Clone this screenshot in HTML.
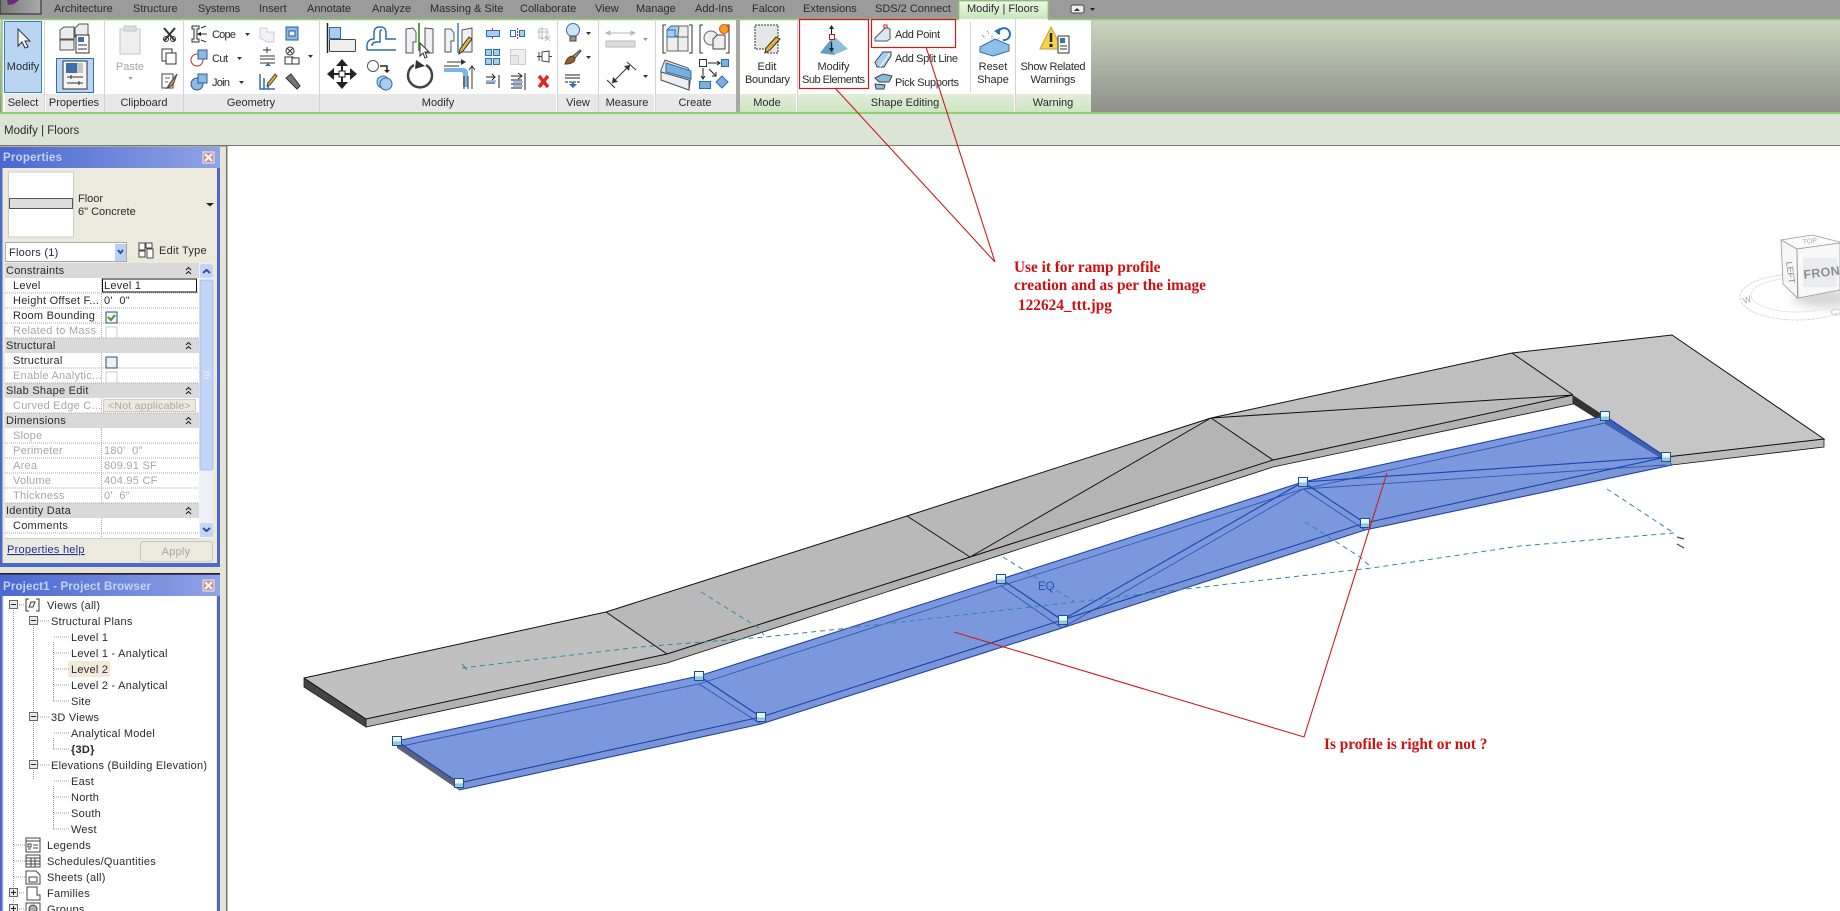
<!DOCTYPE html>
<html><head><meta charset="utf-8"><title>Modify | Floors</title>
<style>
html,body{margin:0;padding:0;background:#e6e4d6;overflow:hidden}
svg{display:block}
text{font-family:"Liberation Sans",sans-serif;font-size:11px;fill:#2a2a2a}
.c{text-anchor:middle}
.g{fill:#a6a6a6}
.h{font-weight:bold;fill:#c6d2f6;font-size:11.500px}
.p{letter-spacing:.25px}
.r{font-family:"Liberation Serif",serif;font-weight:bold;fill:#d01010;font-size:15.300px}
</style></head><body>
<svg width="1840" height="911" viewBox="0 0 1840 911" xmlns="http://www.w3.org/2000/svg">
<defs>
<linearGradient id="rb" x1="0" y1="0" x2="0" y2="1"><stop offset="0" stop-color="#c9d5bd"/><stop offset="1" stop-color="#8f908a"/></linearGradient>
<linearGradient id="tl" x1="0" y1="0" x2="1" y2="0"><stop offset="0" stop-color="#4a68cf"/><stop offset="1" stop-color="#8fa3e6"/></linearGradient>
<linearGradient id="hd" x1="0" y1="0" x2="0" y2="1"><stop offset="0" stop-color="#f4fdff"/><stop offset=".55" stop-color="#dff6fa"/><stop offset=".56" stop-color="#8ec5c8"/><stop offset="1" stop-color="#9fd0d4"/></linearGradient>
<linearGradient id="gl" x1="0" y1="0" x2="0" y2="1"><stop offset="0" stop-color="#dfeed8"/><stop offset="1" stop-color="#cfe4c6"/></linearGradient>
<linearGradient id="tb" x1="0" y1="0" x2="0" y2="1"><stop offset="0" stop-color="#eef8e8"/><stop offset="1" stop-color="#c4e6b4"/></linearGradient>
<linearGradient id="ap" x1="0" y1="0" x2="1" y2="0"><stop offset="0" stop-color="#777"/><stop offset="1" stop-color="#aaa"/></linearGradient>
<filter id="bl" x="-30%" y="-60%" width="160%" height="220%"><feGaussianBlur stdDeviation="5"/></filter>
<symbol id="H" viewBox="0 0 10 10"><rect x=".5" y=".5" width="9" height="9" fill="url(#hd)" stroke="#1d4f9e"/></symbol>
</defs>

<!-- top -->
<rect x="0" y="0" width="1840" height="19" fill="#9b9b9b"/>
<rect x="0" y="19" width="1840" height="94" fill="url(#rb)"/>
<rect x="0" y="-1" width="41" height="15" fill="url(#ap)" stroke="#222"/>
<path d="M7 0h12l-5 4-6 1z" fill="#6a2a78"/>
<g>
<text x="54" y="12">Architecture</text><text x="133" y="12">Structure</text><text x="198" y="12">Systems</text><text x="259" y="12">Insert</text><text x="307" y="12">Annotate</text><text x="372" y="12">Analyze</text><text x="430" y="12">Massing &amp; Site</text><text x="520" y="12">Collaborate</text><text x="595" y="12">View</text><text x="636" y="12">Manage</text><text x="695" y="12">Add-Ins</text><text x="752" y="12">Falcon</text><text x="803" y="12">Extensions</text><text x="875" y="12">SDS/2 Connect</text>
<rect x="959" y="1" width="89" height="19" fill="url(#tb)"/><path d="M959 19V1h89v18" fill="none" stroke="#8fd06e"/>
<text x="967" y="12">Modify | Floors</text>
<rect x="1071" y="5" width="13" height="8" rx="2" fill="#eee" stroke="#444"/><path d="M1074 11l3-3 3 3z" fill="#333"/><path d="M1090 8h5l-2.500 3z" fill="#222"/>
</g>
<!-- ribbon white -->
<rect x="2" y="19" width="1089" height="94" fill="#fff"/>
<path d="M2 113V19.500H959M1048 19.500H1840" fill="none" stroke="#8fd06e" stroke-width="1.500"/>
<rect x="0" y="112" width="1840" height="2" fill="#8fd06e"/>
<rect x="0" y="114" width="1840" height="31" fill="#dce4d5"/>
<g fill="#e8e8e8">
<rect x="5" y="94" width="39" height="18"/><rect x="46" y="94" width="58" height="18"/><rect x="105" y="94" width="78" height="18"/><rect x="184" y="94" width="135" height="18"/><rect x="320" y="94" width="236" height="18"/><rect x="558" y="94" width="40" height="18"/><rect x="599" y="94" width="55" height="18"/><rect x="656" y="94" width="80" height="18"/>
</g>
<g fill="url(#gl)"><rect x="740" y="94" width="56" height="18"/><rect x="798" y="94" width="216" height="18"/><rect x="1016" y="94" width="75" height="18"/></g>
<g fill="#d4d4d4"><rect x="44" y="19" width="1" height="93"/><rect x="104" y="19" width="1" height="93"/><rect x="183" y="19" width="1" height="93"/><rect x="319" y="19" width="1" height="93"/><rect x="557" y="19" width="1" height="93"/><rect x="598" y="19" width="1" height="93"/><rect x="655" y="19" width="1" height="93"/><rect x="970" y="22" width="1" height="70"/><rect x="797" y="19" width="1" height="93"/><rect x="1015" y="19" width="1" height="93"/></g>
<rect x="736" y="20" width="4" height="92" fill="#a8a8a4"/>
<g>
<text class="c" x="23" y="106">Select</text><text class="c" x="74" y="106">Properties</text><text class="c" x="144" y="106">Clipboard</text><text class="c" x="251" y="106">Geometry</text><text class="c" x="438" y="106">Modify</text><text class="c" x="578" y="106">View</text><text class="c" x="627" y="106">Measure</text><text class="c" x="695" y="106">Create</text><text class="c" x="767" y="106">Mode</text><text class="c" x="905" y="106">Shape Editing</text><text class="c" x="1053" y="106">Warning</text>
</g>
<!-- Select -->
<rect x="4.500" y="21.500" width="37" height="71" fill="#b9d5f2" stroke="#3a80c8"/>
<path d="M18 29v17l4-4 3 6 3-1-3-6h5z" fill="#f4f8fc" stroke="#333"/>
<text class="c" x="23" y="70">Modify</text>
<!-- Properties -->
<g fill="#ececec" stroke="#555"><path d="M60 30l4-3h10v12H60z"/><path d="M75 28l4-4h9v13H75z"/><path d="M60 40h14v10H60z"/></g>
<rect x="76" y="35" width="13" height="18" fill="#fff" stroke="#333"/><rect x="78" y="37" width="6" height="5" fill="#3f6fa8"/><path d="M78 45h9M78 49h9" stroke="#333"/>
<rect x="56.500" y="58.500" width="37" height="34" fill="#b9d5f2" stroke="#2b6fb8"/>
<rect x="63" y="61" width="24" height="28" fill="#f4f4f4" stroke="#333"/><rect x="66" y="63" width="11" height="10" fill="#3f6fa8"/><path d="M77 63h6v10h-6z" fill="#c5c5c5"/><path d="M67 77h16M67 83h16" stroke="#333"/><path d="M71 75v4M79 81v4" stroke="#333"/>
<!-- Clipboard -->
<rect x="120" y="29" width="20" height="25" fill="#eee" stroke="#c4c4c4"/><rect x="124" y="26" width="12" height="5" fill="#ddd" stroke="#c4c4c4"/>
<text class="c g" x="130" y="70">Paste</text><path d="M128 77h5l-2.500 3z" fill="#aaa"/>
<path d="M164 28l11 13M175 28l-11 13" stroke="#333" stroke-width="2"/><circle cx="166" cy="39" r="2.500" fill="none" stroke="#333"/><circle cx="173" cy="39" r="2.500" fill="none" stroke="#333"/>
<rect x="162" y="49" width="10" height="12" fill="#fff" stroke="#333"/><rect x="166" y="53" width="10" height="11" fill="#fff" stroke="#333"/>
<rect x="162" y="74" width="11" height="14" fill="#fff" stroke="#444"/><path d="M165 78h5M165 82h3" stroke="#3a70b0"/><path d="M177 74l-7 9-3 5 6-3z" fill="#c09040" stroke="#444"/>
<!-- Geometry -->
<path d="M192 26h7v3h-2v10h2v3h-7v-3h2V29h-2zM201 28l5-2M201 40l5 2M199 34h8" fill="#eee" stroke="#333"/><path d="M197 34l4-2v4z" fill="#111"/>
<text x="212" y="38" textLength="24">Cope</text><path d="M245 33h5l-2.500 3z" fill="#333"/>
<circle cx="197" cy="60" r="6" fill="#fff" stroke="#c03030"/><rect x="198" y="50" width="9" height="9" fill="#8db8e0" stroke="#2a5f98"/>
<text x="212" y="62" textLength="16">Cut</text><path d="M237 57h5l-2.500 3z" fill="#333"/>
<circle cx="197" cy="84" r="6" fill="#8db8e0" stroke="#2a5f98"/><rect x="198" y="74" width="9" height="9" fill="#8db8e0" stroke="#2a5f98"/>
<text x="212" y="86" textLength="18">Join</text><path d="M239 81h5l-2.500 3z" fill="#333"/>
<path d="M260 28h7v4h7v10h-7l-7-4z" fill="#eef2f6" stroke="#c8ccd0"/>
<rect x="286" y="27" width="12" height="13" fill="#8db8e0" stroke="#2a5f98"/><rect x="289" y="31" width="6" height="5" fill="#e8f0f8" stroke="#2a5f98"/>
<path d="M263 50h8M267 47v6M260 56h15M260 59h15M260 63h15" stroke="#333" fill="none"/><path d="M268 63l-3 3h6z" fill="#2a6fb8"/>
<circle cx="290" cy="51" r="4" fill="none" stroke="#333"/><path d="M287 48l6 6M293 48l-6 6" stroke="#333"/><rect x="285" y="57" width="8" height="7" fill="#fff" stroke="#333"/><rect x="292" y="58" width="7" height="6" fill="#fff" stroke="#333"/><path d="M308 55h5l-2.500 3z" fill="#333"/>
<path d="M260 74v15h15M264 89V78M268 89v-7" stroke="#2a6fb8" stroke-width="1.500" fill="none"/><path d="M275 74l-7 9-1 3 3-1 7-9z" fill="#e8b030" stroke="#444"/>
<path d="M286 78l5-4 9 12-3 3z" fill="#777" stroke="#333"/>
<!-- Modify large -->
<path d="M327.500 23v30" stroke="#222" stroke-width="1.500"/><rect x="329.500" y="27.500" width="11" height="11" fill="#a9cdf0" stroke="#2f6fa8"/><rect x="329.500" y="39.500" width="26" height="12" rx="1" fill="#eee" stroke="#444"/>
<path d="M367 50v-4c0-5 3-7 7-7v-6c0-4 2-6 5-6h2c3 0 5 2 5 6v6h10M367 50h29M372 46c0-2 1-4 5-4h3V33c0-2 0-3 2-3" fill="none" stroke="#2f6fa8" stroke-width="1.500"/>
<path d="M406 29l7-1 3 4v10h-3v11h-7zM433 29l-8-1v25h8z" fill="#eef2f6" stroke="#555"/><path d="M419 23v28" stroke="#5aa040" stroke-width="2"/><path d="M420 43v13l3-3 2 5 2-1-2-5h4z" fill="#fff" stroke="#333"/>
<path d="M445 29h6l3 4v8h-3v11h-6zM462 30l10-2v24h-10z" fill="#eef2f6" stroke="#555"/><path d="M458 23v30" stroke="#3a80c8" stroke-width="1.500"/><path d="M472 39l-9 12-4 3 1-5 9-12z" fill="#e8b030" stroke="#333"/>
<path d="M342 59l6 7h-12zM342 89l6-7h-12zM327 74l7-6v12zM357 74l-7-6v12z" fill="#222"/><rect x="339" y="71" width="6" height="6" fill="#fff" stroke="#222"/><path d="M342 65v6M342 77v6M334 74h5M345 74h5" stroke="#222" stroke-width="2"/>
<circle cx="373" cy="66" r="5.500" fill="#fff" stroke="#555"/><path d="M380 66h7v5" fill="none" stroke="#222" stroke-width="1.500"/><path d="M384 70h6l-3 3z" fill="#222"/><circle cx="383" cy="82" r="6" fill="#a9cdf0" stroke="#2f6fa8"/><circle cx="386" cy="84" r="6" fill="#a9cdf0" stroke="#2f6fa8"/>
<path d="M414 65a12 12 0 1 0 12 0" fill="none" stroke="#444" stroke-width="2.500"/><path d="M416 60l9 6-10 3z" fill="#333"/>
<path d="M444 66h15M447 62h14" fill="none" stroke="#333"/><path d="M461 59l5 3-5 3z" fill="#333"/><path d="M444 68h19c3 0 5 2 5 5v14h-5V74c0-1-1-2-2-2H444z" fill="#7cb4e4"/><path d="M464 89V76M468 89V76M472 89V66M469 70l3-4 3 4" fill="none" stroke="#333"/>
<!-- small modify -->
<path d="M492.500 28v11" stroke="#c03030" stroke-dasharray="2 1"/><rect x="486.500" y="30.500" width="13" height="6" fill="#a9cdf0" stroke="#2f6fa8"/>
<path d="M517.500 28v11" stroke="#c03030" stroke-dasharray="2 1"/><rect x="510.500" y="30.500" width="5" height="6" fill="#fff" stroke="#2f6fa8"/><rect x="519.500" y="30.500" width="5" height="6" fill="#a9cdf0" stroke="#2f6fa8"/>
<path d="M539 29h8v9h-8zM537 32h12M542 27v13" stroke="#bbb" fill="none"/><path d="M545 36l5 5M550 36l-5 5" stroke="#bbb"/>
<g fill="#a9cdf0" stroke="#2f6fa8"><rect x="485.500" y="49.500" width="6" height="6"/><rect x="493.500" y="49.500" width="6" height="6"/><rect x="485.500" y="58.500" width="6" height="6"/><rect x="493.500" y="58.500" width="6" height="6"/></g>
<rect x="510.500" y="49.500" width="15" height="15" fill="#f0f0f0" stroke="#ccc"/><rect x="510.500" y="55.500" width="8" height="9" fill="#e8e8e8" stroke="#ccc"/>
<path d="M542 52l7-1v11l-7-1zM537 56.500h5M549 56.500h3M539 52v9" fill="none" stroke="#444"/>
<path d="M486 77h9M492 74l3 3-3 3M486 83h9M499 75v13" fill="none" stroke="#222"/><path d="M486 81h10" stroke="#3a80c8"/>
<path d="M511 76h10M518 73l4 3-4 3M511 80h11M511 84h11M511 88h11M525 73v17" fill="none" stroke="#222"/><path d="M513 82h10M513 86h10" stroke="#3a80c8"/>
<path d="M539 76l9 11M548 76l-9 11" stroke="#e02828" stroke-width="3.500"/>
<!-- view -->
<circle cx="573" cy="30" r="6.500" fill="#cfe4f8" stroke="#3a6fa8"/><rect x="570" y="36" width="6" height="5" fill="#999" stroke="#444"/><path d="M586 32h5l-2.500 3z" fill="#333"/>
<path d="M565 64c2-7 6-8 8-8l2 3c0 3-4 5-10 5z" fill="#a05a20" stroke="#444"/><path d="M573 56l7-6 1 1-6 7z" fill="#c8a060" stroke="#444"/><path d="M586 56h5l-2.500 3z" fill="#333"/>
<path d="M565 75h15M565 78h15" stroke="#222"/><path d="M565 82h15" stroke="#222" stroke-dasharray="3 1"/><path d="M573 82v3" stroke="#2a6fb8" stroke-width="2"/><path d="M569 84h8l-4 4z" fill="#2a6fb8"/>
<!-- measure -->
<path d="M606 33h29M606 33l4-2v4zM635 33l-4-2v4z" stroke="#b8b8b8" fill="#b8b8b8"/><rect x="606" y="41" width="29" height="6" fill="#ddd" stroke="#bbb"/><path d="M643 38h5l-2.500 3z" fill="#999"/>
<path d="M612 83l18-18M607 80l8 8M627 62l9 8" stroke="#333" fill="none"/><path d="M630 65l-6 1 5 5zM612 83l6-1-5-5z" fill="#333"/><path d="M643 75h5l-2.500 3z" fill="#333"/>
<!-- create -->
<path d="M666 25h-3v28h3M689 25h3v28h-3" fill="none" stroke="#333"/><path d="M667 37v-7l4-4h8v9l-4 2z" fill="#a9cdf0" stroke="#2f6fa8"/><path d="M667 37h11v14h-11zM678 37h10v14h-10zM679 26l9 0v11h-10z" fill="#eee" stroke="#666"/><path d="M667 30h8v7h-8z" fill="#a9cdf0" stroke="#2f6fa8"/>
<path d="M703 25h-3v28h3M726 25h3v28h-3" fill="none" stroke="#333"/><circle cx="711" cy="38" r="7" fill="#eee" stroke="#666"/><path d="M713 39l4-4h8v14h-12z" fill="#eee" stroke="#444"/><circle cx="724" cy="29" r="4.500" fill="#f0a020" stroke="#e04a10"/>
<path d="M661 70l4-10 23 8 3 7-2 15-28-10z" fill="#e4e8ee" stroke="#555"/><path d="M666 63l25 8v8l-25-7z" fill="#7ab0de" stroke="#2f6fa8"/><path d="M661 72l27 8v10" fill="#e4e8ee" stroke="#555"/><path d="M661 72l28 8v10l-28-10z" fill="#eceff3" stroke="#555"/>
<rect x="699.500" y="59.500" width="7" height="7" fill="#fff" stroke="#333"/><rect x="721.500" y="59.500" width="7" height="7" fill="#7ab0de" stroke="#2f6fa8"/><path d="M708 63h12M717 61l3 2-3 2M703 68v11M701 76l2 3 2-3M709 69l7 7M716 72v4h-4" stroke="#222" fill="none"/><rect x="699.500" y="81.500" width="11" height="7" fill="#7ab0de" stroke="#2f6fa8"/><path d="M722 76l6 6-6 6-6-6z" fill="#7ab0de" stroke="#2f6fa8"/>
<!-- mode -->
<path d="M755 25h23v28h-12v-4h-11z" fill="#e6e6e6" stroke="#333" stroke-dasharray="2 1"/><path d="M780 39l-10 11-5 3 1-5 10-11z" fill="#e8b030" stroke="#333"/>
<text class="c" x="767" y="70">Edit</text><text class="c" x="767.500" y="83" textLength="45">Boundary</text>
<!-- shape edit -->
<path d="M820 53l12-15h4l12 11-14 6z" fill="#8dc0da"/><path d="M820 53l12-15 2 17z" fill="#5f9fc4"/><path d="M831.500 26v10M831.500 42v8" stroke="#222"/><path d="M829 29l2.500-4 2.500 4zM829 48l2.500 4 2.500-4z" fill="#222"/><rect x="829.500" y="34.500" width="5" height="5" fill="#fff" stroke="#c02020"/>
<text class="c" x="833.500" y="70" textLength="32">Modify</text><text class="c" x="833.500" y="83" textLength="63">Sub Elements</text>
<path d="M875 38l11-11 4 2v10l-3 2h-12z" fill="#dce8f0" stroke="#555"/><rect x="884" y="25" width="3" height="3" fill="#fff" stroke="#c02020"/><text x="895" y="38" textLength="45">Add Point</text>
<path d="M875 62l8-10h8v4l-7 11h-7z" fill="#a9cdf0" stroke="#444"/><path d="M880 67l10-14" stroke="#fff"/><text x="895" y="62" textLength="63">Add Split Line</text>
<path d="M875 78l8-4 9 2-3 6-10 0zM875 84l10 1-1 4-8 0z" fill="#8dbcd8" stroke="#444"/><text x="895" y="86" textLength="64">Pick Supports</text>
<path d="M980 47l15-8 14 6v6l-16 5-13-4z" fill="#8dc0e8" stroke="#2f6fa8"/><path d="M982 35l3 3M987 31l2 3M992 36v3M997 40l2-2" stroke="#666" stroke-dasharray="1 1"/><path d="M998 34a6 6 0 1 1 5 6" fill="none" stroke="#2a6fb8" stroke-width="2"/><path d="M994 31l6-3v7z" fill="#2a6fb8"/>
<text class="c" x="993" y="70">Reset</text><text class="c" x="993" y="83">Shape</text>
<path d="M1051 27l-11 22h22z" fill="#f6d44a" stroke="#c0a030"/><path d="M1051 33v9" stroke="#222" stroke-width="2.500"/><rect x="1049.500" y="44" width="3" height="3" fill="#222"/><rect x="1058" y="36" width="11" height="17" fill="#fff" stroke="#333"/><rect x="1060" y="38" width="5" height="5" fill="#3f6fa8"/><path d="M1060 46h7M1060 49h7" stroke="#333"/>
<text class="c" x="1053" y="70" textLength="65">Show Related</text><text class="c" x="1053" y="83" textLength="45">Warnings</text>

<text x="4" y="134" style="font-size:11.500px">Modify | Floors</text>
<rect x="0" y="145" width="1840" height="1.500" fill="#77776c"/>

<!-- viewport -->
<rect x="226" y="146" width="1614" height="765" fill="#fff"/>
<rect x="226" y="146" width="1.500" height="765" fill="#77776c"/>

<!-- grey slab -->
<polygon points="366,719 667,654 970,557 1273,460 1573,395 1573,404 1273,467 970,565 667,663 366,727" fill="#b2b2b2" stroke="#111" stroke-width=".8"/>
<polygon points="1666,457 1824,439 1824,447 1672,465" fill="#bbb" stroke="#111" stroke-width=".8"/>
<polygon points="304,678 366,719 366,727 304,687" fill="#444" stroke="#222" stroke-width=".8"/>
<polygon points="1573,395 1605,416 1605,424 1573,404" fill="#333"/>
<polygon points="304,678 606,612 667,654 366,719" fill="#c0c0c0"/>
<polygon points="606,612 907,516 970,557 667,654" fill="#b9b9b9"/>
<polygon points="907,516 1211,418 970,557" fill="#b8b8b8"/>
<polygon points="1211,418 1273,460 970,557" fill="#b4b4b4"/>
<polygon points="1211,418 1512,353 1573,395" fill="#bfbfbf"/>
<polygon points="1211,418 1573,395 1273,460" fill="#bbb"/>
<polygon points="1512,353 1672,335 1824,439 1666,457 1573,395" fill="#c6c6c6"/>
<path d="M304 678L606 612 907 516 1211 418 1512 353 1672 335 1824 439 1666 457M1573 395L1273 460 970 557 667 654 366 719 304 678M606 612L667 654M907 516L970 557M1211 418L970 557M1211 418L1273 460M1211 418L1573 395M1512 353L1573 395" fill="none" stroke="#111" stroke-width="1"/>

<!-- blue slab -->
<polygon points="397,741 699,676 1001,579 1303,482 1605,416 1672,465 1365,530 1062,628 761,724 459,790" fill="#7c98dc"/>
<polygon points="397,741 459,783 459,790 397,748" fill="#5a627c"/>
<polygon points="1605,416 1666,457 1672,465 1605,424" fill="#3f5fb0"/>
<polygon points="459,783 761,717 1062,620 1365,523 1666,457 1672,465 1365,530 1062,628 761,724 459,790" fill="#7c95d4"/>
<path d="M397 747L699 684 1001 586 1303 489 1605 423M699 684L761 724M1001 586L1062 628M1303 489L1365 530M1303 489L1062 628M1303 489L1666 465" fill="none" stroke="#2f55b5" stroke-width=".9"/>
<path d="M397 741L699 676 1001 579 1303 482 1605 416 1666 457M397 741L459 783 761 717 1062 620 1365 523 1666 457M699 676L761 717M1001 579L1062 620M1303 482L1365 523M1303 482L1062 620M1303 482L1666 457M459 790L761 724 1062 628 1365 530 1672 465" fill="none" stroke="#1742b4" stroke-width="1.100"/>
<text x="1038" y="590" style="font-size:11.500px;fill:#2450b0">EQ</text>

<!-- dashes -->
<path d="M462 668L640 647 765 637 840 629 1075 602 1246 582 1372 568 1520 546 1674 533M701 592L759 628 765 637M1003 557L1075 602M1305 522L1360 557 1372 568M1607 489L1674 533" fill="none" stroke="#2c8aa8" stroke-width="1" stroke-dasharray="5 4"/>
<path d="M1677 537l7 2M1677 544l7 4" stroke="#234a7a" stroke-width="1.200"/>
<path d="M462 664l5 6" stroke="#2c8aa8"/>

<!-- handles -->
<g><use href="#H" x="392" y="736" width="10" height="10"/><use href="#H" x="454" y="778" width="10" height="10"/><use href="#H" x="694" y="671" width="10" height="10"/><use href="#H" x="756" y="712" width="10" height="10"/><use href="#H" x="996" y="574" width="10" height="10"/><use href="#H" x="1058" y="615" width="10" height="10"/><use href="#H" x="1298" y="477" width="10" height="10"/><use href="#H" x="1360" y="518" width="10" height="10"/><use href="#H" x="1600" y="411" width="10" height="10"/><use href="#H" x="1661" y="452" width="10" height="10"/></g>

<!-- red annotation -->
<rect x="799.500" y="19.500" width="69" height="69" fill="none" stroke="#c81e1e" stroke-width="1.200"/>
<rect x="871.500" y="19.500" width="84" height="28" fill="none" stroke="#c81e1e" stroke-width="1.200"/>
<path d="M835 88L995 262M926 47L995 262M954 632L1304 737 1387 473" fill="none" stroke="#d01c1c" stroke-width="1.100"/>
<text class="r" x="1014" y="272">Use it for ramp profile</text>
<text class="r" x="1014" y="290">creation and as per the image</text>
<text class="r" x="1018" y="310">122624_ttt.jpg</text>
<text class="r" x="1324" y="749">Is profile is right or not ?</text>

<!-- nav cube -->
<ellipse cx="1825" cy="298" rx="32" ry="9" fill="#d4d4d4" filter="url(#bl)"/>
<ellipse cx="1797" cy="297" rx="57" ry="23" fill="none" stroke="#d6d6d6" stroke-width=".9" stroke-dasharray="3 1"/>
<ellipse cx="1797" cy="295" rx="46" ry="17" fill="none" stroke="#e2e2e2" stroke-width=".8"/>
<path d="M1781 240l31-5 28 7v1l-43 6z" fill="#fbfbfb" stroke="#999" stroke-width=".8"/>
<path d="M1781 240l16 9 .5 49-14.500-14z" fill="#f6f6f6" stroke="#999" stroke-width=".8"/>
<path d="M1797 249l43-6v47l-42 8z" fill="#f8f8f8" stroke="#999" stroke-width=".8"/>
<rect x="1803" y="258" width="34" height="29" fill="#ececec"/>
<text x="1804" y="279" transform="rotate(-7 1804 279)" style="font-size:12.500px;font-weight:bold;fill:#8a8f96;letter-spacing:.3px">FRONT</text>
<text x="1786" y="262" transform="rotate(82 1786 262)" style="font-size:9px;fill:#888">LEFT</text>
<text x="1803" y="244" transform="rotate(-5 1803 244)" style="font-size:7px;fill:#aaa">TOP</text>
<text x="1744" y="304" transform="rotate(-20 1744 304)" style="font-size:9px;fill:#aaa">W</text>
<ellipse cx="1836" cy="312" rx="5" ry="3" fill="none" stroke="#ccc"/>

<!-- PROPERTIES -->
<rect x="0" y="147" width="220" height="420" fill="#4c68cd"/>
<rect x="0" y="147" width="220" height="21" fill="url(#tl)"/>
<text class="h" x="3" y="161" textLength="59">Properties</text>
<rect x="203" y="152" width="11" height="11" fill="#c98f8f" stroke="#eee"/><path d="M205 154l7 7M212 154l-7 7" stroke="#fff" stroke-width="2"/>
<rect x="2.500" y="168" width="214.500" height="395" fill="#eceadc"/>
<rect x="8.500" y="172" width="65" height="65" fill="#fff" stroke="#ccc"/>
<rect x="9.500" y="198.500" width="63" height="10" fill="#ddd" stroke="#555"/>
<text x="78" y="202">Floor</text><text x="78" y="215">6" Concrete</text><path d="M206 203h8l-4 3.500z" fill="#222"/>
<rect x="5.500" y="242.500" width="121" height="19" fill="#fff" stroke="#aaa"/><text class="p" x="9" y="256">Floors (1)</text>
<rect x="115" y="244" width="11" height="17" fill="#bcd0f4"/><path d="M118 250l2.500 3 2.500-3" fill="none" stroke="#2d4fa0" stroke-width="2"/>
<path d="M139 243h6v7h-6zM146 243h6v5h-6zM139 251h6v6h-6zM147 249h6v9h-6z" fill="#fff" stroke="#444"/>
<text class="p" x="159" y="254">Edit Type</text>
<rect x="5" y="263" width="194" height="275" fill="#fff"/>
<g fill="#d9d9d9"><rect x="5" y="263" width="194" height="15"/><rect x="5" y="338" width="194" height="15"/><rect x="5" y="383" width="194" height="15"/><rect x="5" y="413" width="194" height="15"/><rect x="5" y="503" width="194" height="15"/></g>
<g stroke="#aaa" stroke-dasharray="1 1" fill="none"><path d="M5 293h194M5 308h194M5 323h194M5 338h194M5 368h194M5 383h194M5 413h194M5 443h194M5 458h194M5 473h194M5 488h194M5 503h194M5 533h194M101.500 278v60M101.500 353v30M101.500 398v15M101.500 428v75M101.500 518v20"/></g>
<rect x="5" y="538" width="194" height="1" fill="#ccc"/>
<g class="p">
<text class="p" x="6" y="274">Constraints</text><text class="p" x="13" y="289">Level</text><text class="p" x="13" y="304">Height Offset F...</text><text class="p" x="104" y="304">0'&#160; 0"</text><text class="p" x="13" y="319">Room Bounding</text><text class="p g" x="13" y="334">Related to Mass</text>
<text class="p" x="6" y="349">Structural</text><text class="p" x="13" y="364">Structural</text><text class="p g" x="13" y="379">Enable Analytic...</text>
<text class="p" x="6" y="394">Slab Shape Edit</text><text class="p g" x="13" y="409">Curved Edge C...</text>
<text class="p" x="6" y="424">Dimensions</text><text class="p g" x="13" y="439">Slope</text><text class="p g" x="13" y="454">Perimeter</text><text class="p g" x="104" y="454">180'&#160; 0"</text><text class="p g" x="13" y="469">Area</text><text class="p g" x="104" y="469">809.91 SF</text><text class="p g" x="13" y="484">Volume</text><text class="p g" x="104" y="484">404.95 CF</text><text class="p g" x="13" y="499">Thickness</text><text class="p g" x="104" y="499">0'&#160; 6"</text>
<text class="p" x="6" y="514">Identity Data</text><text class="p" x="13" y="529">Comments</text>
</g>
<rect x="102.500" y="279" width="94" height="13" fill="#fff" stroke="#111"/><text class="p" x="104" y="289">Level 1</text>
<rect x="106" y="312" width="11" height="11" fill="#f2f8f2" stroke="#2b4f6f"/><path d="M108 317l3 3 4-5" fill="none" stroke="#3a9a3a" stroke-width="2"/>
<rect x="106" y="327" width="11" height="11" fill="#fff" stroke="#ccc"/><rect x="106" y="357" width="11" height="11" fill="#eef2f6" stroke="#2b4f6f"/><rect x="106" y="372" width="11" height="11" fill="#fff" stroke="#ccc"/>
<rect x="103.500" y="399.500" width="92" height="12" fill="#eceae0" stroke="#ccc"/><text class="p g" x="108" y="409" style="font-size:10.500px">&lt;Not applicable&gt;</text>
<g fill="none" stroke="#222" stroke-width="1.100"><path d="M186 270l2.500-2.500 2.500 2.500M186 274l2.500-2.500 2.500 2.500M186 345l2.500-2.500 2.500 2.500M186 349l2.500-2.500 2.500 2.500M186 390l2.500-2.500 2.500 2.500M186 394l2.500-2.500 2.500 2.500M186 420l2.500-2.500 2.500 2.500M186 424l2.500-2.500 2.500 2.500M186 510l2.500-2.500 2.500 2.500M186 514l2.500-2.500 2.500 2.500"/></g>
<rect x="199" y="263" width="14" height="275" fill="#eef0f6"/>
<rect x="200" y="264" width="13" height="14" rx="2" fill="#c4d6f8"/><path d="M203 273l3.500-3 3.500 3" fill="none" stroke="#2d4fa0" stroke-width="2"/>
<rect x="200" y="280" width="13" height="190" rx="1" fill="#c2d4f8" stroke="#8aa4dc" stroke-width=".5"/>
<path d="M203 372h7M203 375h7M203 378h7" stroke="#f0f4ff"/>
<rect x="200" y="523" width="13" height="14" rx="2" fill="#c4d6f8"/><path d="M203 528l3.500 3 3.500-3" fill="none" stroke="#2d4fa0" stroke-width="2"/>
<text class="p" x="7" y="553" style="fill:#1e2f9e;text-decoration:underline">Properties help</text>
<rect x="140.500" y="541.500" width="72" height="20" rx="3" fill="#eceadc" stroke="#c8c8c0"/><text class="c p g" x="176" y="555">Apply</text>

<!-- PROJECT BROWSER -->
<rect x="0" y="573" width="220" height="1.500" fill="#222"/>
<rect x="0" y="574.500" width="220" height="337" fill="#4c68cd"/>
<rect x="0" y="575" width="220" height="21" fill="url(#tl)"/>
<text class="h" x="3" y="590" textLength="148">Project1 - Project Browser</text>
<rect x="203" y="580" width="11" height="11" fill="#c98f8f" stroke="#eee"/><path d="M205 582l7 7M212 582l-7 7" stroke="#fff" stroke-width="2"/>
<rect x="2.500" y="596" width="214.500" height="315" fill="#eceadc"/>
<rect x="4" y="596" width="212" height="315" fill="#fff"/>
<rect x="68" y="661" width="42" height="16" fill="#f2ead8"/>
<g fill="none" stroke="#999" stroke-dasharray="1 1">
<path d="M13.500 610v295M33.500 626v154M53.500 642v59M53.500 738v11M53.500 786v43M17 605h8M38 621h12M38 717h12M38 765h12M54 637h16M54 653h16M54 669h16M54 685h16M54 701h16M54 733h16M54 749h16M54 781h16M54 797h16M54 813h16M54 829h16M14 845h11M14 861h11M14 877h11M17 893h8M17 909h8"/>
</g>
<g fill="#e8e8e8" stroke="#666"><rect x="9.500" y="600.500" width="8" height="8"/><rect x="29.500" y="616.500" width="8" height="8"/><rect x="29.500" y="712.500" width="8" height="8"/><rect x="29.500" y="760.500" width="8" height="8"/><rect x="9.500" y="888.500" width="8" height="8"/><rect x="9.500" y="904.500" width="8" height="8"/></g>
<path d="M11 604.500h5M31 620.500h5M31 716.500h5M31 764.500h5M11 892.500h5M13.500 890v5M11 908.500h5M13.500 906v5" stroke="#222"/>
<path d="M29 599h-3v12h3M36 599h3v12h-3" fill="none" stroke="#333"/><path d="M29 607l2-5h4l-2 5z" fill="none" stroke="#333"/>
<g fill="#fff" stroke="#444"><rect x="26" y="838" width="14" height="14"/><rect x="26" y="855" width="14" height="12"/><path d="M26 871h10l4 4v9H26z"/><path d="M27 887h10v8h3v5H27z"/><rect x="26" y="903" width="14" height="12"/></g>
<path d="M26 841h14M26 858h14M26 861h14M26 864h14M31 858v9M35 858v9" stroke="#444"/><path d="M28 844h3v3h-3zM28 849h3M33 845h5M33 848h5" stroke="#444" fill="none"/><rect x="29" y="877" width="8" height="5" fill="none" stroke="#444"/><circle cx="33" cy="909" r="4" fill="#aaa" stroke="#444"/>
<g class="p">
<text class="p" x="47" y="609">Views (all)</text><text class="p" x="51" y="625">Structural Plans</text><text class="p" x="71" y="641">Level 1</text><text class="p" x="71" y="657">Level 1 - Analytical</text><text class="p" x="71" y="673">Level 2</text><text class="p" x="71" y="689">Level 2 - Analytical</text><text class="p" x="71" y="705">Site</text><text class="p" x="51" y="721">3D Views</text><text class="p" x="71" y="737">Analytical Model</text><text class="p" x="71" y="753" style="font-weight:bold">{3D}</text><text class="p" x="51" y="769">Elevations (Building Elevation)</text><text class="p" x="71" y="785">East</text><text class="p" x="71" y="801">North</text><text class="p" x="71" y="817">South</text><text class="p" x="71" y="833">West</text><text class="p" x="47" y="849">Legends</text><text class="p" x="47" y="865">Schedules/Quantities</text><text class="p" x="47" y="881">Sheets (all)</text><text class="p" x="47" y="897">Families</text><text class="p" x="47" y="913">Groups</text>
</g>
</svg>
</body></html>
